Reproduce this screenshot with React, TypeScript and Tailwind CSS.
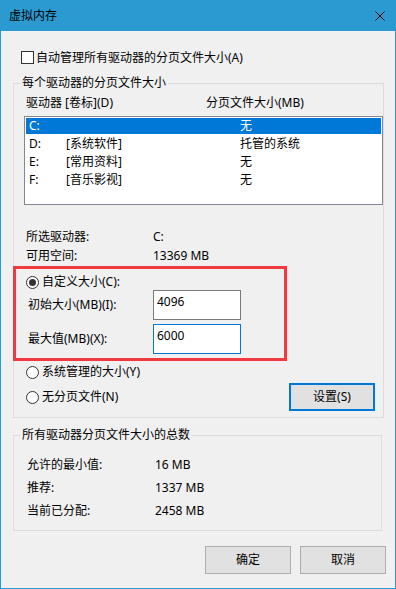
import React from 'react';

const drives = [
  { letter: 'C:', label: '', size: '无' },
  { letter: 'D:', label: '[系统软件]', size: '托管的系统' },
  { letter: 'E:', label: '[常用资料]', size: '无' },
  { letter: 'F:', label: '[音乐影视]', size: '无' },
];

const totals = [
  { label: '允许的最小值:', value: '16 MB' },
  { label: '推荐:', value: '1337 MB' },
  { label: '当前已分配:', value: '2458 MB' },
];

const Radio = ({ checked = false }: { checked?: boolean }) => (
  <span className="w-[13px] h-[13px] shrink-0 rounded-full border border-[#333333] bg-white flex items-center justify-center">
    {checked && <span className="w-[7px] h-[7px] rounded-full bg-[#333333]" />}
  </span>
);

const Field = ({ value, focused = false }: { value: string; focused?: boolean }) => (
  <div
    className={`w-[88px] h-[30px] bg-white border pl-[3px] pt-[3px] leading-[16px] ${
      focused ? 'border-[#0078d7]' : 'border-[#7a7a7a]'
    }`}
  >
    {value}
  </div>
);

export default function App() {
  return (
    <div className="w-[396px] h-[589px] bg-[#f0f0f0] border-x border-b border-[#2b9ad0] flex flex-col text-[12px] text-black font-['Noto_Sans','Noto_Sans_CJK_SC',sans-serif]">
      {/* Title bar */}
      <div className="h-[31px] shrink-0 bg-[#2b9ad0] flex items-center justify-between pl-[8px] pr-[10px]">
        <span className="leading-[16px]">虚拟内存</span>
        <svg width="10" height="10" viewBox="0 0 10 10" className="block">
          <path d="M0.5 0.5 L9.5 9.5 M9.5 0.5 L0.5 9.5" stroke="#000" strokeWidth="1" />
        </svg>
      </div>

      {/* Auto manage */}
      <div className="mt-[20px] ml-[20px] h-[13px] flex items-center gap-[2px]">
        <span className="w-[13px] h-[13px] shrink-0 border border-[#333333] bg-white" />
        <span className="leading-[16px]">自动管理所有驱动器的分页文件大小(A)</span>
      </div>

      {/* Per-drive group */}
      <fieldset className="mt-[11px] ml-[12px] w-[369px] border border-[#dcdcdc] pt-[4px] pb-[6px]">
        <legend className="ml-[6px] px-[2px] h-[16px] leading-[16px]">每个驱动器的分页文件大小</legend>

        <div className="flex pl-[12px] h-[16px] leading-[16px]">
          <span className="w-[180px]">驱动器 [卷标](D)</span>
          <span>分页文件大小(MB)</span>
        </div>

        <div className="mt-[5px] ml-[10px] w-[359px] h-[89px] border border-[#828790] bg-white px-[1px]">
          {drives.map((d, i) => (
            <div key={d.letter} className="h-[18px] py-[1px]">
              <div
                className={`h-[16px] flex items-center pl-[3px] leading-[16px] ${
                  i === 0 ? 'bg-[#0078d7] text-white' : ''
                }`}
              >
                <span className="w-[37px]">{d.letter}</span>
                <span className="w-[174px]">{d.label}</span>
                <span>{d.size}</span>
              </div>
            </div>
          ))}
        </div>

        <div className="mt-[22px] pl-[12px]">
          <div className="h-[19px] flex items-center leading-[16px]">
            <span className="w-[127px]">所选驱动器:</span>
            <span>C:</span>
          </div>
          <div className="h-[19px] flex items-center leading-[16px]">
            <span className="w-[127px]">可用空间:</span>
            <span>13369 MB</span>
          </div>
        </div>

        {/* Custom size, outlined in red */}
        <div className="relative pt-[9px]">
          <div className="pl-[12px] h-[16px] flex items-center gap-[3px] leading-[16px]">
            <Radio checked />
            <span>自定义大小(C):</span>
          </div>
          <div className="pl-[14px] h-[30px] flex items-center leading-[16px]">
            <span className="w-[125px]">初始大小(MB)(I):</span>
            <Field value="4096" />
          </div>
          <div className="mt-[4px] pl-[14px] h-[30px] flex items-center leading-[16px]">
            <span className="w-[125px]">最大值(MB)(X):</span>
            <Field value="6000" focused />
          </div>
          <div className="absolute left-[-1px] top-[1px] w-[274px] h-[95px] border-[3px] border-[#f03a3f] pointer-events-none" />
        </div>

        <div className="mt-[10px] pl-[12px] h-[16px] flex items-center gap-[3px] leading-[16px]">
          <Radio />
          <span>系统管理的大小(Y)</span>
        </div>
        <div className="mt-[3px] pl-[12px] pr-[8px] h-[28px] flex items-center leading-[16px]">
          <Radio />
          <span className="ml-[3px]">无分页文件(N)</span>
          <button className="ml-auto w-[86px] h-[28px] border-2 border-[#0078d7] bg-[#e1e1e1] leading-[16px]">
            设置(S)
          </button>
        </div>
      </fieldset>

      {/* Totals group */}
      <fieldset className="mt-[9px] ml-[12px] w-[369px] border border-[#dcdcdc] pt-[10px] pb-[8px]">
        <legend className="ml-[6px] px-[2px] h-[16px] leading-[16px]">所有驱动器分页文件大小的总数</legend>
        {totals.map((t) => (
          <div key={t.label} className="pl-[13px] h-[23px] flex items-center leading-[16px]">
            <span className="w-[128px]">{t.label}</span>
            <span>{t.value}</span>
          </div>
        ))}
      </fieldset>

      {/* Dialog buttons */}
      <div className="mt-[15px] pr-[9px] flex justify-end gap-[9px]">
        <button className="w-[86px] h-[28px] border border-[#adadad] bg-[#e1e1e1] leading-[16px]">确定</button>
        <button className="w-[86px] h-[28px] border border-[#adadad] bg-[#e1e1e1] leading-[16px]">取消</button>
      </div>
    </div>
  );
}
